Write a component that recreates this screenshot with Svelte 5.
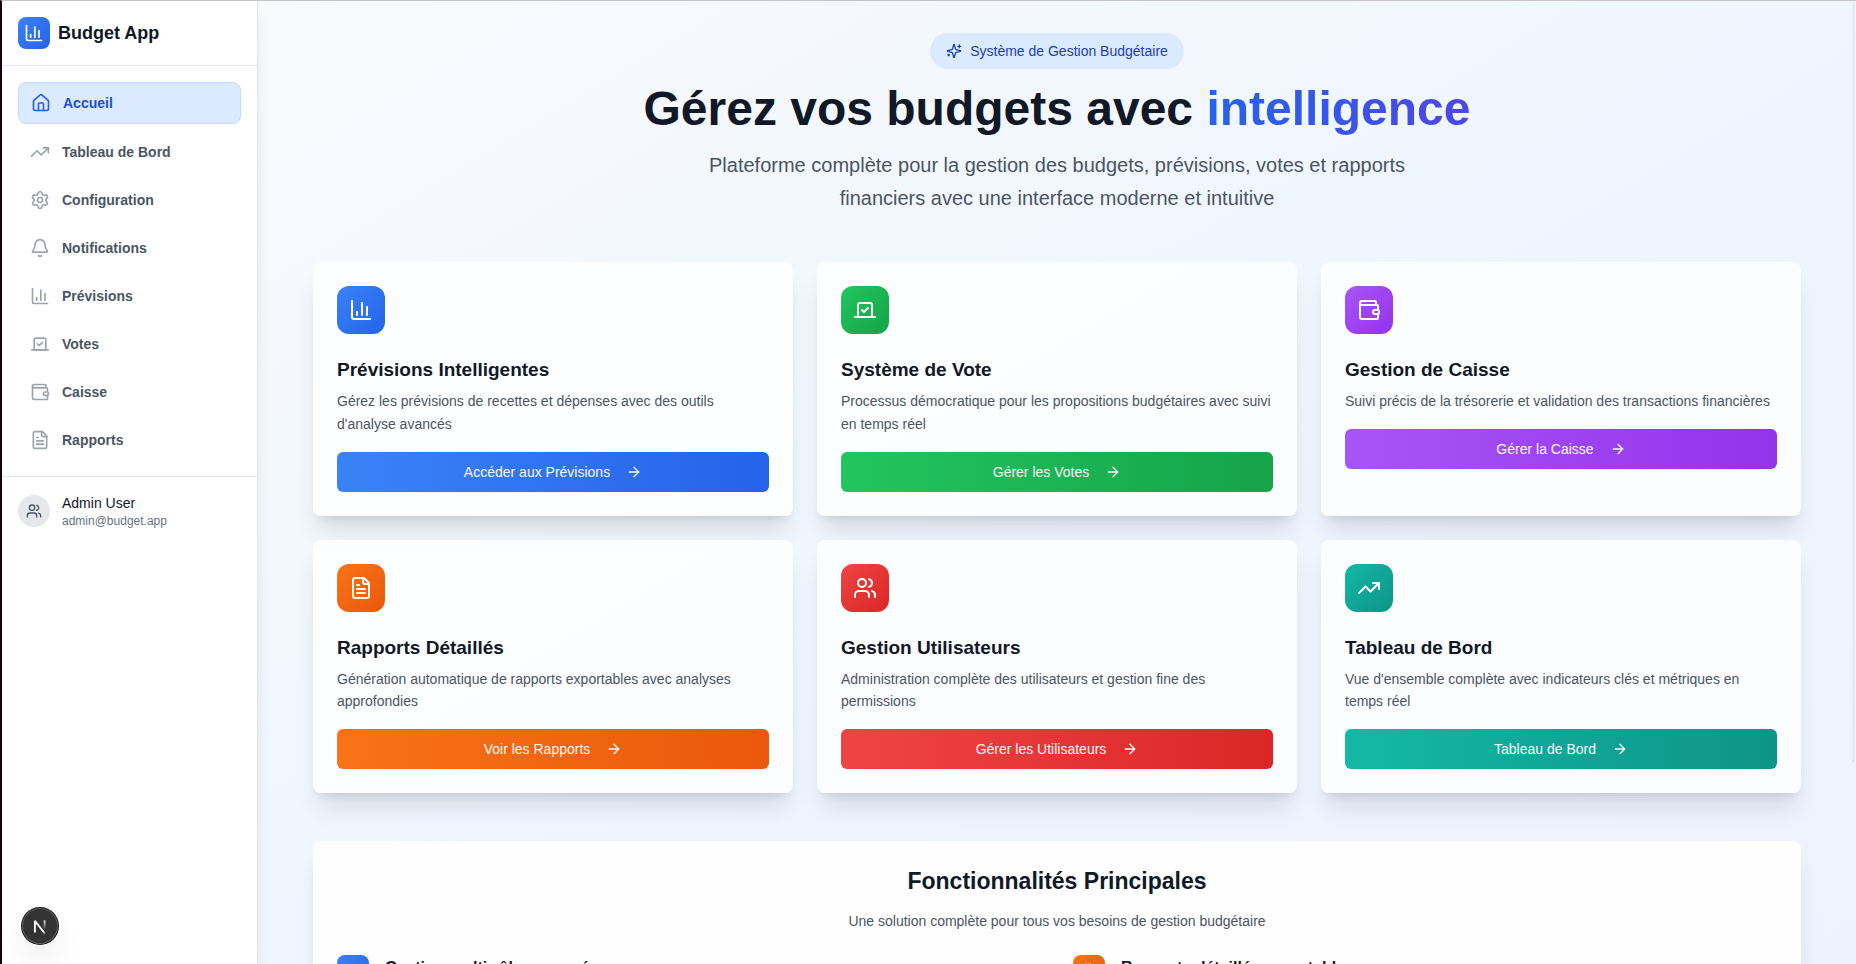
<script>
  const icons = {
    home: [
      'M15 21v-8a1 1 0 0 0-1-1h-4a1 1 0 0 0-1 1v8',
      'M3 10a2 2 0 0 1 .709-1.528l7-5.999a2 2 0 0 1 2.582 0l7 5.999A2 2 0 0 1 21 10v9a2 2 0 0 1-2 2H5a2 2 0 0 1-2-2z'
    ],
    trend: ['m22 7-8.5 8.5-5-5L2 17', 'M16 7h6v6'],
    settings: [
      'M9.671 4.136a2.34 2.34 0 0 1 4.659 0 2.34 2.34 0 0 0 3.319 1.915 2.34 2.34 0 0 1 2.33 4.033 2.34 2.34 0 0 0 0 3.831 2.34 2.34 0 0 1-2.33 4.033 2.34 2.34 0 0 0-3.319 1.915 2.34 2.34 0 0 1-4.659 0 2.34 2.34 0 0 0-3.32-1.915 2.34 2.34 0 0 1-2.33-4.033 2.34 2.34 0 0 0 0-3.831A2.34 2.34 0 0 1 6.35 6.051a2.34 2.34 0 0 0 3.319-1.915',
      'M15 12a3 3 0 1 1-6 0 3 3 0 0 1 6 0z'
    ],
    bell: [
      'M10.268 21a2 2 0 0 0 3.464 0',
      'M3.262 15.326A1 1 0 0 0 4 17h16a1 1 0 0 0 .74-1.673C19.41 13.956 18 12.499 18 8A6 6 0 0 0 6 8c0 4.499-1.411 5.956-2.738 7.326'
    ],
    chart: ['M3 3v16a2 2 0 0 0 2 2h16', 'M18 17V9', 'M13 17V5', 'M8 17v-3'],
    vote: ['m9 12 2 2 4-4', 'M5 7c0-1.1.9-2 2-2h10a2 2 0 0 1 2 2v12H5V7Z', 'M22 19H2'],
    wallet: [
      'M19 7V4a1 1 0 0 0-1-1H5a2 2 0 0 0 0 4h15a1 1 0 0 1 1 1v4h-3a2 2 0 0 0 0 4h3a1 1 0 0 0 1-1v-2a1 1 0 0 0-1-1',
      'M3 5v14a2 2 0 0 0 2 2h15a1 1 0 0 0 1-1v-4'
    ],
    file: [
      'M15 2H6a2 2 0 0 0-2 2v16a2 2 0 0 0 2 2h12a2 2 0 0 0 2-2V7Z',
      'M14 2v4a2 2 0 0 0 2 2h4',
      'M10 9H8',
      'M16 13H8',
      'M16 17H8'
    ],
    users: [
      'M16 21v-2a4 4 0 0 0-4-4H6a4 4 0 0 0-4 4v2',
      'M13 7a4 4 0 1 1-8 0 4 4 0 0 1 8 0z',
      'M22 21v-2a4 4 0 0 0-3-3.87',
      'M16 3.13a4 4 0 0 1 0 7.75'
    ],
    sparkles: [
      'M9.937 15.5A2 2 0 0 0 8.5 14.063l-6.135-1.582a.5.5 0 0 1 0-.962L8.5 9.936A2 2 0 0 0 9.937 8.5l1.582-6.135a.5.5 0 0 1 .963 0L14.063 8.5A2 2 0 0 0 15.5 9.937l6.135 1.581a.5.5 0 0 1 0 .964L15.5 14.063a2 2 0 0 0-1.437 1.437l-1.582 6.135a.5.5 0 0 1-.963 0z',
      'M20 3v4',
      'M22 5h-4',
      'M4 17v2',
      'M5 18H3'
    ],
    arrow: ['M5 12h14', 'm12 5 7 7-7 7']
  };

  const nav = [
    { label: 'Accueil', icon: 'home' },
    { label: 'Tableau de Bord', icon: 'trend' },
    { label: 'Configuration', icon: 'settings' },
    { label: 'Notifications', icon: 'bell' },
    { label: 'Prévisions', icon: 'chart' },
    { label: 'Votes', icon: 'vote' },
    { label: 'Caisse', icon: 'wallet' },
    { label: 'Rapports', icon: 'file' }
  ];

  let current = $state('Accueil');

  const cards = [
    {
      title: 'Prévisions Intelligentes',
      text: "Gérez les prévisions de recettes et dépenses avec des outils d'analyse avancés",
      action: 'Accéder aux Prévisions',
      icon: 'chart',
      tone: 'blue'
    },
    {
      title: 'Système de Vote',
      text: 'Processus démocratique pour les propositions budgétaires avec suivi en temps réel',
      action: 'Gérer les Votes',
      icon: 'vote',
      tone: 'green'
    },
    {
      title: 'Gestion de Caisse',
      text: 'Suivi précis de la trésorerie et validation des transactions financières',
      action: 'Gérer la Caisse',
      icon: 'wallet',
      tone: 'purple'
    },
    {
      title: 'Rapports Détaillés',
      text: 'Génération automatique de rapports exportables avec analyses approfondies',
      action: 'Voir les Rapports',
      icon: 'file',
      tone: 'orange'
    },
    {
      title: 'Gestion Utilisateurs',
      text: 'Administration complète des utilisateurs et gestion fine des permissions',
      action: 'Gérer les Utilisateurs',
      icon: 'users',
      tone: 'red'
    },
    {
      title: 'Tableau de Bord',
      text: "Vue d'ensemble complète avec indicateurs clés et métriques en temps réel",
      action: 'Tableau de Bord',
      icon: 'trend',
      tone: 'teal'
    }
  ];

  const features = [
    { title: 'Gestion multi-rôles avancée', icon: 'users', tone: 'blue' },
    { title: 'Rapports détaillés exportables', icon: 'file', tone: 'orange' }
  ];
</script>

{#snippet glyph(name, size)}
  <svg
    width={size}
    height={size}
    viewBox="0 0 24 24"
    fill="none"
    stroke="currentColor"
    stroke-width="2"
    stroke-linecap="round"
    stroke-linejoin="round"
    aria-hidden="true"
  >
    {#each icons[name] as d}
      <path {d} />
    {/each}
  </svg>
{/snippet}

<div class="shell">
  <aside class="sidebar">
    <div class="brand">
      <span class="tile small blue">{@render glyph('chart', 20)}</span>
      <span class="brand-name">Budget App</span>
    </div>
    <nav class="nav">
      {#each nav as item}
        <a
          href="#{item.icon}"
          class="nav-item"
          class:active={current === item.label}
          aria-current={current === item.label ? 'page' : undefined}
          onclick={() => (current = item.label)}
        >
          {@render glyph(item.icon, 20)}
          <span>{item.label}</span>
        </a>
      {/each}
    </nav>
    <div class="user">
      <span class="avatar">{@render glyph('users', 16)}</span>
      <div>
        <p class="user-name">Admin User</p>
        <p class="user-mail">admin@budget.app</p>
      </div>
    </div>
  </aside>

  <main class="main">
    <div class="container">
      <header class="hero">
        <span class="pill">{@render glyph('sparkles', 16)}Système de Gestion Budgétaire</span>
        <h1>Gérez vos budgets avec <span class="accent">intelligence</span></h1>
        <p>
          Plateforme complète pour la gestion des budgets, prévisions, votes et rapports financiers
          avec une interface moderne et intuitive
        </p>
      </header>

      <section class="cards">
        {#each cards as card}
          <article class="card">
            <span class="tile {card.tone}">{@render glyph(card.icon, 24)}</span>
            <h2>{card.title}</h2>
            <p>{card.text}</p>
            <button type="button" class="action {card.tone}">
              {card.action}
              {@render glyph('arrow', 16)}
            </button>
          </article>
        {/each}
      </section>

      <section class="features">
        <h2>Fonctionnalités Principales</h2>
        <p>Une solution complète pour tous vos besoins de gestion budgétaire</p>
        <div class="feature-grid">
          {#each features as feature}
            <div class="feature">
              <span class="tile small {feature.tone}">{@render glyph(feature.icon, 16)}</span>
              <h3>{feature.title}</h3>
            </div>
          {/each}
        </div>
      </section>
    </div>
  </main>

  <div class="thumb"></div>

  <button type="button" class="devtools" aria-label="Next.js">
    <svg width="36" height="36" viewBox="0 0 36 36" fill="none" aria-hidden="true">
      <defs>
        <linearGradient id="diag" gradientUnits="userSpaceOnUse" x1="18" y1="19" x2="24" y2="26">
          <stop stop-color="#fff" />
          <stop offset="0.6" stop-color="#fff" />
          <stop offset="1" stop-color="#fff" stop-opacity="0" />
        </linearGradient>
        <linearGradient id="stem" gradientUnits="userSpaceOnUse" x1="22" y1="12" x2="22" y2="22">
          <stop stop-color="#fff" stop-opacity="0.9" />
          <stop offset="1" stop-color="#fff" stop-opacity="0" />
        </linearGradient>
      </defs>
      <path d="M12.9 24.6V12.8L24 27" stroke="url(#diag)" stroke-width="1.9" stroke-linejoin="bevel" />
      <path d="M22.6 12.4V22.5" stroke="url(#stem)" stroke-width="1.9" />
    </svg>
  </button>
</div>

<style>
  :global(body) {
    margin: 0;
    font-family: 'Liberation Sans', Arial, sans-serif;
    color: #111827;
  }

  .shell,
  .shell * {
    box-sizing: border-box;
  }

  .shell {
    position: relative;
    display: flex;
    height: 100vh;
    overflow: hidden;
    border-top: 1px solid #c4c4c7;
    border-left: 2px solid #18000f;
  }

  h1,
  h2,
  h3,
  p {
    margin: 0;
  }

  svg {
    display: block;
    flex-shrink: 0;
  }

  .blue {
    --from: #3b82f6;
    --to: #2563eb;
  }
  .green {
    --from: #22c55e;
    --to: #16a34a;
  }
  .purple {
    --from: #a855f7;
    --to: #9333ea;
  }
  .orange {
    --from: #f97316;
    --to: #ea580c;
  }
  .red {
    --from: #ef4444;
    --to: #dc2626;
  }
  .teal {
    --from: #14b8a6;
    --to: #0d9488;
  }

  .tile {
    display: flex;
    flex-shrink: 0;
    align-items: center;
    justify-content: center;
    width: 48px;
    height: 48px;
    border-radius: 12px;
    color: #fff;
    background: linear-gradient(to bottom right, var(--from), var(--to));
  }
  .tile.small {
    width: 32px;
    height: 32px;
    border-radius: 8px;
  }

  .sidebar {
    position: relative;
    z-index: 1;
    flex: 0 0 256px;
    background: #fff;
    border-right: 1px solid #e5e7eb;
    box-shadow:
      0 10px 15px -3px rgb(0 0 0 / 0.1),
      0 4px 6px -4px rgb(0 0 0 / 0.1);
  }
  .brand {
    display: flex;
    align-items: center;
    gap: 8px;
    padding: 16px;
    border-bottom: 1px solid #e5e7eb;
  }
  .brand-name {
    font-size: 18px;
    line-height: 30px;
    font-weight: 700;
  }
  .nav {
    display: flex;
    flex-direction: column;
    gap: 8px;
    padding: 16px;
  }
  .nav-item {
    display: flex;
    align-items: center;
    gap: 12px;
    padding: 10px 12px;
    border-radius: 8px;
    font-size: 14px;
    line-height: 20px;
    font-weight: 700;
    color: #4b5563;
    text-decoration: none;
  }
  .nav-item svg {
    color: #9ca3af;
  }
  .nav-item.active {
    border: 1px solid #bfdbfe;
    background: #dbeafe;
    color: #1d4ed8;
  }
  .nav-item.active svg {
    color: #2563eb;
  }
  .user {
    display: flex;
    align-items: center;
    gap: 12px;
    padding: 16px;
    border-top: 1px solid #e5e7eb;
  }
  .avatar {
    display: flex;
    align-items: center;
    justify-content: center;
    width: 32px;
    height: 32px;
    border-radius: 50%;
    background: #e5e7eb;
    color: #4b5563;
  }
  .user-name {
    font-size: 14px;
    line-height: 20px;
  }
  .user-mail {
    font-size: 12px;
    line-height: 16px;
    color: #6b7280;
  }

  .main {
    flex: 1;
    min-width: 0;
    overflow-y: auto;
    scrollbar-width: none;
    background: linear-gradient(to bottom right, #f8fafc, #eff6ff, #eef2ff);
  }
  .container {
    max-width: 1536px;
    margin: 0 auto;
    padding: 32px 24px;
  }
  .hero {
    display: flex;
    flex-direction: column;
    align-items: center;
    gap: 16px;
    margin-bottom: 48px;
    text-align: center;
  }
  .pill {
    display: inline-flex;
    align-items: center;
    gap: 8px;
    padding: 8px 16px;
    border-radius: 18px;
    background: #dbeafe;
    color: #1e40af;
    font-size: 14px;
    line-height: 20px;
  }
  h1 {
    font-size: 48px;
    line-height: 48px;
    font-weight: 700;
  }
  .accent {
    color: transparent;
    background: linear-gradient(to right, #2563eb, #4f46e5);
    background-clip: text;
    -webkit-background-clip: text;
  }
  .hero p {
    max-width: 768px;
    font-size: 20px;
    line-height: 1.625;
    color: #4b5563;
  }

  .cards {
    display: grid;
    grid-template-columns: repeat(3, minmax(0, 1fr));
    gap: 24px;
    margin-bottom: 48px;
  }
  .card,
  .features {
    padding: 24px;
    border-radius: 8px;
    box-shadow:
      0 20px 25px -5px rgb(0 0 0 / 0.1),
      0 8px 10px -6px rgb(0 0 0 / 0.1);
  }
  .card {
    background: rgb(255 255 255 / 0.8);
  }
  .card h2 {
    margin: 22px 0 6px;
    font-size: 19px;
    line-height: 28px;
    font-weight: 700;
  }
  .card p {
    margin-bottom: 16px;
    font-size: 14px;
    line-height: 1.625;
    color: #4b5563;
  }
  .action {
    display: flex;
    align-items: center;
    justify-content: center;
    gap: 16px;
    width: 100%;
    height: 40px;
    padding: 0 16px;
    border: 0;
    border-radius: 6px;
    background: linear-gradient(to right, var(--from), var(--to));
    color: #f8fafc;
    font-family: inherit;
    font-size: 14px;
    line-height: 20px;
    cursor: pointer;
  }

  .features {
    background: rgb(255 255 255 / 0.9);
    text-align: center;
  }
  .features h2 {
    font-size: 23px;
    line-height: 32px;
    font-weight: 700;
  }
  .features p {
    margin: 14px 0 24px;
    font-size: 14px;
    line-height: 20px;
    color: #4b5563;
  }
  .feature-grid {
    display: grid;
    grid-template-columns: repeat(2, minmax(0, 1fr));
    gap: 32px;
    text-align: left;
  }
  .feature {
    display: flex;
    gap: 16px;
  }
  .feature h3 {
    font-size: 16px;
    line-height: 26px;
    font-weight: 700;
  }

  .thumb {
    position: absolute;
    top: 0;
    right: 1px;
    width: 3px;
    height: 79%;
    background: rgb(0 0 40 / 0.04);
  }

  .devtools {
    position: absolute;
    z-index: 2;
    left: 20px;
    bottom: 20px;
    width: 36px;
    height: 36px;
    padding: 0;
    border: 0;
    border-radius: 50%;
    background: #333;
    box-shadow:
      inset 0 0 0 1px #5c5c5c,
      0 0 0 1px #171717,
      0 16px 32px -8px rgb(0 0 0 / 0.24);
    cursor: pointer;
  }
</style>
